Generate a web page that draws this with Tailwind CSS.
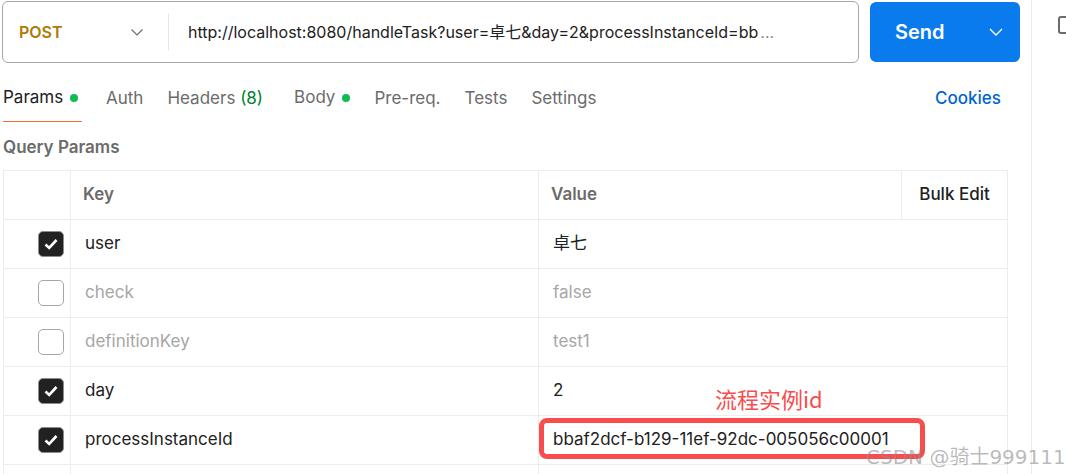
<!DOCTYPE html>
<html lang="zh">
<head>
  <meta charset="UTF-8">
  <title>Postman request</title>
  <script src="https://cdn.jsdelivr.net/npm/@tailwindcss/browser@4"></script>
</head>
<body class="bg-white overflow-hidden font-['Inter','Noto_Sans_CJK_SC',sans-serif]">
  <div class="relative w-[1066px] h-[474px] overflow-hidden flex">
    <!-- request pane -->
    <div class="w-[1032px] h-full shrink-0 border-r border-[#ededed] flex flex-col">
      <div class="flex pt-px pl-[2px] h-[62px] shrink-0">
        <div class="w-[857px] h-[62px] border border-[#a6a6a6] rounded-[6px] flex items-center">
          <div class="w-[166px] h-[36px] border-r border-[#e6e6e6] flex items-center justify-between pl-[16px] pr-[24px]">
            <span class="text-[#ad7a03] text-[16px] font-semibold">POST</span>
            <svg class="w-[14px] h-[14px] text-[#6b6b6b]" viewBox="0 0 14 14" fill="none" stroke="currentColor" stroke-width="1.2"><path d="M1.5 4.5 7 10l5.5-5.5"/></svg>
          </div>
          <div class="pl-[19px] w-[684px] text-[16px] text-[#212121] whitespace-nowrap overflow-hidden flex">
            <span>http://localhost:8080/handleTask?user=卓七&amp;day=2&amp;processInstanceId=bb</span><span class="text-[#8a8a8a] ml-[2px]">...</span>
          </div>
        </div>
        <div class="ml-[11px] mt-px w-[150px] h-[60px] bg-[#097bed] rounded-[6px] flex items-center justify-between pl-[25px] pr-[17px] text-white">
          <span class="text-[20px] font-semibold">Send</span>
          <svg class="w-[14px] h-[14px]" viewBox="0 0 14 14" fill="none" stroke="currentColor" stroke-width="1.4"><path d="M1 4 7 10l6-6"/></svg>
        </div>
      </div>

      <div class="flex items-start h-[60px] pl-[3px] pt-[24px] text-[17px] text-[#6b6b6b] shrink-0">
        <div class="flex flex-col w-[79px]">
          <div class="flex items-center h-[24px]"><span class="text-[#212121]">Params</span><span class="ml-[7px] w-[8px] h-[8px] rounded-full bg-[#0cbb52]"></span></div>
          <div class="mt-[11px] h-[1px] w-[79px] bg-[#f26b3a]"></div>
        </div>
        <span class="ml-[24px] h-[24px] leading-[24px]">Auth</span>
        <span class="ml-[24px] h-[24px] leading-[24px]">Headers <span class="text-[#007f31]">(8)</span></span>
        <div class="ml-[31px] flex items-center h-[24px]"><span>Body</span><span class="ml-[7px] w-[8px] h-[8px] rounded-full bg-[#0cbb52]"></span></div>
        <span class="ml-[24px] h-[24px] leading-[24px]">Pre-req.</span>
        <span class="ml-[24px] h-[24px] leading-[24px]">Tests</span>
        <span class="ml-[24px] h-[24px] leading-[24px]">Settings</span>
        <span class="ml-auto mr-[30px] h-[24px] leading-[24px] font-medium text-[#0265d2]">Cookies</span>
      </div>

      <div class="h-[48px] pl-[3px] pt-[13px] text-[17px] font-semibold text-[#6b6b6b] leading-[24px] shrink-0">Query Params</div>

      <!-- params table -->
      <div class="ml-[3px] w-[1005px] border-t border-l border-r border-[#ededed] text-[17px] text-[#212121]">
        <div class="flex h-[49px] border-b border-[#ededed] font-semibold text-[#6b6b6b]">
          <div class="w-[67px] border-r border-[#ededed]"></div>
          <div class="w-[468px] border-r border-[#ededed] pl-[12px] flex items-center">Key</div>
          <div class="w-[363px] border-r border-[#ededed] pl-[12px] flex items-center">Value</div>
          <div class="flex-1 flex items-center justify-center text-[#212121] font-medium">Bulk Edit</div>
        </div>
        <div class="flex h-[49px] border-b border-[#ededed]">
          <div class="w-[67px] border-r border-[#ededed] flex items-center justify-end pr-[6px]">
            <span class="w-[26px] h-[26px] rounded-[5px] bg-[#212121] border border-[#8c8c8c] flex items-center justify-center"><svg class="w-[16px] h-[16px]" viewBox="0 0 16 16" fill="none" stroke="#fff" stroke-width="2.6"><path d="m2.5 8.5 3.7 3.5 7.3-8"/></svg></span>
          </div>
          <div class="w-[468px] border-r border-[#ededed] pl-[14px] flex items-center">user</div>
          <div class="flex-1 pl-[14px] flex items-center">卓七</div>
        </div>
        <div class="flex h-[49px] border-b border-[#ededed] text-[#a6a6a6]">
          <div class="w-[67px] border-r border-[#ededed] flex items-center justify-end pr-[6px]">
            <span class="w-[26px] h-[26px] rounded-[5px] border border-[#a6a6a6]"></span>
          </div>
          <div class="w-[468px] border-r border-[#ededed] pl-[14px] flex items-center">check</div>
          <div class="flex-1 pl-[14px] flex items-center">false</div>
        </div>
        <div class="flex h-[49px] border-b border-[#ededed] text-[#a6a6a6]">
          <div class="w-[67px] border-r border-[#ededed] flex items-center justify-end pr-[6px]">
            <span class="w-[26px] h-[26px] rounded-[5px] border border-[#a6a6a6]"></span>
          </div>
          <div class="w-[468px] border-r border-[#ededed] pl-[14px] flex items-center">definitionKey</div>
          <div class="flex-1 pl-[14px] flex items-center">test1</div>
        </div>
        <div class="flex h-[49px] border-b border-[#ededed]">
          <div class="w-[67px] border-r border-[#ededed] flex items-center justify-end pr-[6px]">
            <span class="w-[26px] h-[26px] rounded-[5px] bg-[#212121] border border-[#8c8c8c] flex items-center justify-center"><svg class="w-[16px] h-[16px]" viewBox="0 0 16 16" fill="none" stroke="#fff" stroke-width="2.6"><path d="m2.5 8.5 3.7 3.5 7.3-8"/></svg></span>
          </div>
          <div class="w-[468px] border-r border-[#ededed] pl-[14px] flex items-center">day</div>
          <div class="flex-1 pl-[14px] flex items-center">2</div>
        </div>
        <div class="flex h-[49px] border-b border-[#ededed]">
          <div class="w-[67px] border-r border-[#ededed] flex items-center justify-end pr-[6px]">
            <span class="w-[26px] h-[26px] rounded-[5px] bg-[#212121] border border-[#8c8c8c] flex items-center justify-center"><svg class="w-[16px] h-[16px]" viewBox="0 0 16 16" fill="none" stroke="#fff" stroke-width="2.6"><path d="m2.5 8.5 3.7 3.5 7.3-8"/></svg></span>
          </div>
          <div class="w-[468px] border-r border-[#ededed] pl-[14px] flex items-center">processInstanceId</div>
          <div class="flex-1 pl-[14px] flex items-center">bbaf2dcf-b129-11ef-92dc-005056c00001</div>
        </div>
        <div class="flex h-[20px]">
          <div class="w-[67px] border-r border-[#ededed]"></div>
          <div class="w-[468px] border-r border-[#ededed]"></div>
        </div>
      </div>
    </div>

    <!-- right rail icon -->
    <div class="pl-[26px] pt-[16px]">
      <div class="w-[16px] h-[18px] border-2 border-[#6b6b6b] rounded-[3px]"></div>
    </div>

    <!-- screenshot annotation -->
    <div class="absolute left-[715px] top-[383px] text-[22px] leading-[30px] text-[#f94c4c] font-['Noto_Sans_CJK_SC',sans-serif]">流程实例id</div>
    <div class="absolute left-[539px] top-[418px] w-[386px] h-[41px] border-[5px] border-[#f94c4c] rounded-[8px]"></div>
    <div class="absolute left-[866px] top-[444px] text-[20px] leading-[26px] text-[#8c8c8c]/60 font-['DejaVu_Sans','Noto_Sans_CJK_SC',sans-serif] whitespace-nowrap">CSDN @骑士999111</div>
  </div>
</body>
</html>
